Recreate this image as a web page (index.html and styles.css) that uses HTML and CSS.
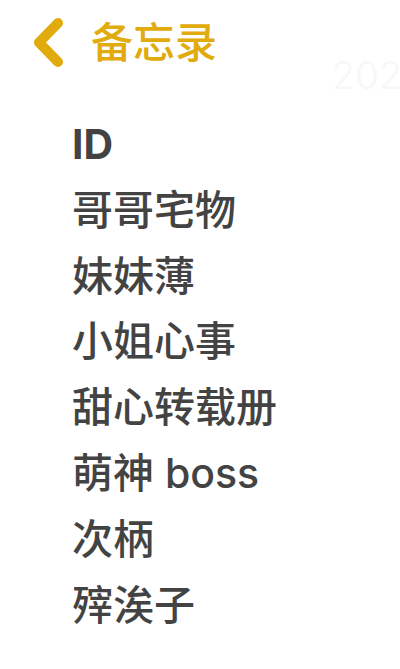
FILE: index.html
```html
<!DOCTYPE html>
<html lang="zh-CN">

<head>
    <meta charset="UTF-8">
    <meta name="viewport" content="width=device-width, initial-scale=1.0">
    <title>备忘录</title>
    <link rel="stylesheet" href="styles.css">
</head>

<body>
    <div class="page">
        <header class="nav">
            <a class="back" href="#">
                <svg class="chevron" viewBox="0 0 32 52" width="32" height="52">
                    <polyline points="25,6 6,25.5 25,45" fill="none" stroke="currentColor" stroke-width="10"
                        stroke-linecap="round" stroke-linejoin="round" />
                </svg>
                <span class="title">备忘录</span>
            </a>
            <span class="date">2023</span>
        </header>

        <ul class="notes">
            <li class="note first">ID</li>
            <li class="note">哥哥宅物</li>
            <li class="note">妹妹薄</li>
            <li class="note">小姐心事</li>
            <li class="note">甜心转载册</li>
            <li class="note">萌神 boss</li>
            <li class="note">次柄</li>
            <li class="note">㱰涘子</li>
        </ul>
    </div>
</body>

</html>
```

FILE: styles.css
```css
body {
    margin: 0;
    padding: 0;
    background-color: #fff;
    font-family: Inter, "Noto Sans CJK SC", sans-serif;
    overflow: hidden;
}

.page {
    width: 400px;
    height: 669px;
    overflow: hidden;
}

.nav {
    display: flex;
    align-items: flex-start;
    height: 112px;
    padding-left: 33px;
}

.back {
    display: flex;
    align-items: flex-start;
    gap: 26px;
    padding-top: 17px;
    color: #e2ab0d;
    text-decoration: none;
}

.chevron {
    display: block;
}

.title {
    font-family: "Noto Sans CJK SC", sans-serif;
    font-size: 42px;
    font-weight: 500;
    line-height: 52px;
    margin-top: -3px;
}

.date {
    margin-left: auto;
    margin-right: -25px;
    margin-top: 52px;
    font-size: 38px;
    font-weight: 300;
    color: #f7f7f7;
    white-space: nowrap;
}

.notes {
    list-style: none;
    margin: 0;
    padding: 0 0 0 72px;
}

.note {
    font-size: 41px;
    font-weight: 500;
    line-height: 65.8px;
    color: #434343;
}

.first {
    font-weight: 700;
}
```
